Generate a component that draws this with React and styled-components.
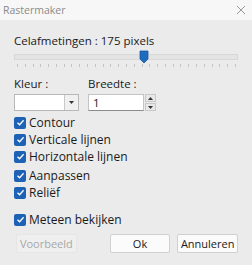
import React from "react";
import styled, { createGlobalStyle } from "styled-components";

const Global = createGlobalStyle`
  html, body { margin: 0; padding: 0; background: #ebebeb; }
  body { font-family: "Open Sans", "Noto Sans", sans-serif; }
`;

const Dialog = styled.div`
  width: 252px;
  height: 265px;
  background: #ebebeb;
  display: flex;
  flex-direction: column;
  overflow: hidden;
`;

const TitleBar = styled.div`
  height: 20px;
  background: #f7f7f7;
  display: flex;
  align-items: center;
  justify-content: space-between;
  padding: 0 6px 0 3px;
  font-size: 10.5px;
  color: #8a8a8a;
`;

const Body = styled.div`
  display: flex;
  flex-direction: column;
  padding: 14px 14px 0 14px;
  color: #1a1a1a;
  font-size: 11.5px;
`;

const Label = styled.div`
  line-height: 14px;
`;

const SliderWrap = styled.div`
  position: relative;
  height: 17px;
  margin-top: 2px;
  width: 224px;
`;

const Track = styled.div`
  position: absolute;
  left: 0;
  right: 0;
  top: 4px;
  height: 4px;
  border: 1px solid #d8d8d8;
  background: #e4e4e4;
`;

const Thumb = styled.svg`
  position: absolute;
  top: 0;
  left: ${(p) => p.$x}px;
`;

const Ticks = styled.div`
  position: absolute;
  left: 3px;
  right: 2px;
  top: 14px;
  height: 3px;
  display: flex;
  justify-content: space-between;
`;

const Tick = styled.span`
  width: 1px;
  height: 3px;
  background: #c4c4c4;
`;

const Row = styled.div`
  display: flex;
  gap: 9px;
  margin-top: 10px;
`;

const Field = styled.div`
  display: flex;
  flex-direction: column;
  gap: 3px;
`;

const Combo = styled.div`
  display: flex;
  width: 65px;
  height: 17px;
  border: 1px solid #b8b8b8;
  background: #fff;
  box-sizing: border-box;
`;

const ComboBtn = styled.div`
  margin-left: auto;
  width: 13px;
  border-left: 1px solid #c8c8c8;
  background: #f0f0f0;
  display: flex;
  align-items: center;
  justify-content: center;
`;

const SpinRow = styled.div`
  display: flex;
  gap: 1px;
`;

const Input = styled.div`
  width: 56px;
  height: 17px;
  box-sizing: border-box;
  border: 1px solid #c4c4c4;
  border-bottom: 1px solid #8a8a8a;
  background: #fff;
  padding-left: 4px;
  line-height: 15px;
  font-size: 11.5px;
`;

const Spin = styled.div`
  display: flex;
  flex-direction: column;
  gap: 1px;
`;

const SpinBtn = styled.div`
  width: 11px;
  height: 8px;
  box-sizing: border-box;
  border: 1px solid #c8c8c8;
  background: #e8e8e8;
  display: flex;
  align-items: center;
  justify-content: center;
`;

const Checks = styled.div`
  display: flex;
  flex-direction: column;
  margin-top: ${(p) => p.$mt}px;
  gap: 4px;
`;

const CheckRow = styled.label`
  display: flex;
  align-items: center;
  gap: 3px;
  height: 13px;
  font-size: 12px;
`;

const Box = styled.span`
  width: 12px;
  height: 12px;
  border-radius: 2px;
  background: #1d62b5;
  display: flex;
  align-items: center;
  justify-content: center;
`;

const Buttons = styled.div`
  display: flex;
  margin-top: 8px;
  padding: 0 0 0 2px;
`;

const Button = styled.div`
  width: 61px;
  height: 19px;
  box-sizing: border-box;
  border: 1px solid ${(p) => (p.$disabled ? "#e6e6e6" : "#d0d0d0")};
  background: ${(p) => (p.$disabled ? "#efefef" : "#fbfbfb")};
  color: ${(p) => (p.$disabled ? "#a8a8a8" : "#1a1a1a")};
  border-radius: 2px;
  display: flex;
  align-items: center;
  justify-content: center;
  font-size: 11px;
  margin-left: ${(p) => p.$ml || 0}px;
`;

const Check = ({ children }) => (
  <CheckRow>
    <Box>
      <svg width="9" height="9" viewBox="0 0 9 9">
        <path d="M1.5 4.7 L3.6 6.7 L7.6 2.3" fill="none" stroke="#fff" strokeWidth="1.3" />
      </svg>
    </Box>
    {children}
  </CheckRow>
);

export default function App() {
  const ticks = Array.from({ length: 29 });
  return (
    <Dialog>
      <Global />
      <TitleBar>
        <span>Rastermaker</span>
        <svg width="10" height="10" viewBox="0 0 10 10">
          <path d="M1 1 L9 9 M9 1 L1 9" stroke="#9a9a9a" strokeWidth="1" />
        </svg>
      </TitleBar>
      <Body>
        <Label>Celafmetingen : 175 pixels</Label>
        <SliderWrap>
          <Track />
          <Thumb $x={125} width="10" height="14" viewBox="0 0 10 14">
            <path d="M1 1 H9 V9 L5 13 L1 9 Z" fill="#1e6cc0" stroke="#1656a0" strokeWidth="0.8" />
          </Thumb>
          <Ticks>
            {ticks.map((_, i) => (
              <Tick key={i} />
            ))}
          </Ticks>
        </SliderWrap>
        <Row>
          <Field>
            <Label>Kleur :</Label>
            <Combo>
              <ComboBtn>
                <svg width="5" height="3" viewBox="0 0 5 3">
                  <path d="M0 0 H5 L2.5 3 Z" fill="#333" />
                </svg>
              </ComboBtn>
            </Combo>
          </Field>
          <Field>
            <Label>Breedte :</Label>
            <SpinRow>
              <Input>1</Input>
              <Spin>
                <SpinBtn>
                  <svg width="5" height="3" viewBox="0 0 5 3">
                    <path d="M0 3 H5 L2.5 0 Z" fill="#333" />
                  </svg>
                </SpinBtn>
                <SpinBtn>
                  <svg width="5" height="3" viewBox="0 0 5 3">
                    <path d="M0 0 H5 L2.5 3 Z" fill="#333" />
                  </svg>
                </SpinBtn>
              </Spin>
            </SpinRow>
          </Field>
        </Row>
        <Checks $mt={5}>
          <Check>Contour</Check>
          <Check>Verticale lijnen</Check>
          <Check>Horizontale lijnen</Check>
        </Checks>
        <Checks $mt={6}>
          <Check>Aanpassen</Check>
          <Check>Reliëf</Check>
        </Checks>
        <Checks $mt={14}>
          <Check>Meteen bekijken</Check>
        </Checks>
        <Buttons>
          <Button $disabled>Voorbeeld</Button>
          <Button $ml={33}>Ok</Button>
          <Button $ml={7}>Annuleren</Button>
        </Buttons>
      </Body>
    </Dialog>
  );
}
